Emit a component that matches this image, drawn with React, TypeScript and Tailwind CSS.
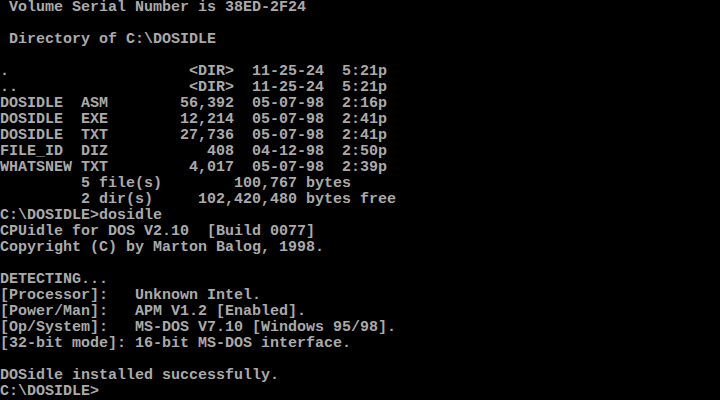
const LINES = [
  " Volume Serial Number is 38ED-2F24",
  "",
  " Directory of C:\\DOSIDLE",
  "",
  ".                    <DIR>  11-25-24  5:21p",
  "..                   <DIR>  11-25-24  5:21p",
  "DOSIDLE  ASM        56,392  05-07-98  2:16p",
  "DOSIDLE  EXE        12,214  05-07-98  2:41p",
  "DOSIDLE  TXT        27,736  05-07-98  2:41p",
  "FILE_ID  DIZ           408  04-12-98  2:50p",
  "WHATSNEW TXT         4,017  05-07-98  2:39p",
  "         5 file(s)        100,767 bytes",
  "         2 dir(s)     102,420,480 bytes free",
  "C:\\DOSIDLE>dosidle",
  "CPUidle for DOS V2.10  [Build 0077]",
  "Copyright (C) by Marton Balog, 1998.",
  "",
  "DETECTING...",
  "[Processor]:   Unknown Intel.",
  "[Power/Man]:   APM V1.2 [Enabled].",
  "[Op/System]:   MS-DOS V7.10 [Windows 95/98].",
  "[32-bit mode]: 16-bit MS-DOS interface.",
  "",
  "DOSidle installed successfully.",
  "C:\\DOSIDLE>",
];

export default function App() {
  return (
    <div className="h-[400px] w-[720px] overflow-hidden bg-black">
      <div className="font-['Liberation_Mono',monospace] text-[15px] font-bold leading-4 text-[#aaaaaa]">
        {LINES.map((line, i) => (
          <div key={i} className="h-4 whitespace-pre">
            {line}
          </div>
        ))}
      </div>
    </div>
  );
}
